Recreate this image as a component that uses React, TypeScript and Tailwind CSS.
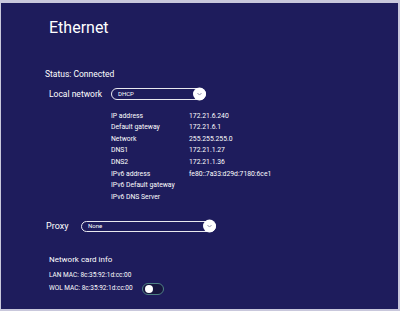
import React from 'react';

const info: [string, string][] = [
  ['IP address', '172.21.6.240'],
  ['Default gateway', '172.21.6.1'],
  ['Network', '255.255.255.0'],
  ['DNS1', '172.21.1.27'],
  ['DNS2', '172.21.1.36'],
  ['IPv6 address', 'fe80::7a33:d29d:7180:6ce1'],
  ['IPv6 Default gateway', ''],
  ['IPv6 DNS Server', ''],
];

function Select({ value, className }: { value: string; className: string }) {
  return (
    <div className={`relative flex items-center rounded-full border border-white/90 ${className}`}>
      <span className="pl-[6px] text-[6px] leading-none text-white">{value}</span>
      <div className="absolute -right-[1px] top-1/2 flex h-[13px] w-[13px] -translate-y-1/2 items-center justify-center rounded-full bg-white">
        <svg viewBox="0 0 10 10" className="h-[7px] w-[7px]" fill="none" stroke="#8b8aa8" strokeWidth="1.4" strokeLinecap="round" strokeLinejoin="round">
          <path d="M2.5 4l2.5 2.5L7.5 4" />
        </svg>
      </div>
    </div>
  );
}

export default function App() {
  return (
    <div
      className="flex h-[311px] w-[400px] flex-col overflow-hidden border-t-[3px] border-r-2 border-b-2 border-l border-[#c9c8dc] bg-[#1e1c5c] text-white"
      style={{ fontFamily: 'Roboto, "Noto Sans", sans-serif' }}
    >
      <div className="ml-[48px] mt-[15px] h-[20px] text-[16px] leading-[20px]">Ethernet</div>

      <div className="ml-[44px] mt-[30px] h-[12px] text-[8.5px] leading-[12px]">Status: Connected</div>

      <div className="mt-[7px] flex h-[14px] items-center">
        <span className="ml-[48px] w-[62px] text-[8.5px]">Local network</span>
        <Select value="DHCP" className="h-[12px] w-[95px]" />
      </div>

      <div className="ml-[110px] mt-[9px] flex flex-col text-[6.8px]">
        {info.map(([k, v]) => (
          <div key={k} className="flex h-[11.6px] items-center">
            <span className="w-[78px]">{k}</span>
            <span>{v}</span>
          </div>
        ))}
      </div>

      <div className="mt-[18px] flex h-[11px] items-center">
        <span className="ml-[45px] w-[35px] text-[9px]">Proxy</span>
        <Select value="None" className="h-[11px] w-[135px]" />
      </div>

      <div className="ml-[48px] mt-[22px] h-[12px] text-[8px] leading-[12px]">Network card info</div>

      <div className="ml-[48px] mt-[4px] h-[10px] text-[6.5px] leading-[10px]">LAN MAC: 8c:35:92:1d:cc:00</div>

      <div className="ml-[48px] mt-[3px] flex h-[12px] items-center">
        <span className="w-[93px] text-[6.5px]">WOL MAC: 8c:35:92:1d:cc:00</span>
        <div className="flex h-[12px] w-[22px] items-center rounded-full border border-[#4f8185] bg-[#17163f] pl-[2px]">
          <div className="h-[8px] w-[8px] rounded-full bg-white" />
        </div>
      </div>
    </div>
  );
}
